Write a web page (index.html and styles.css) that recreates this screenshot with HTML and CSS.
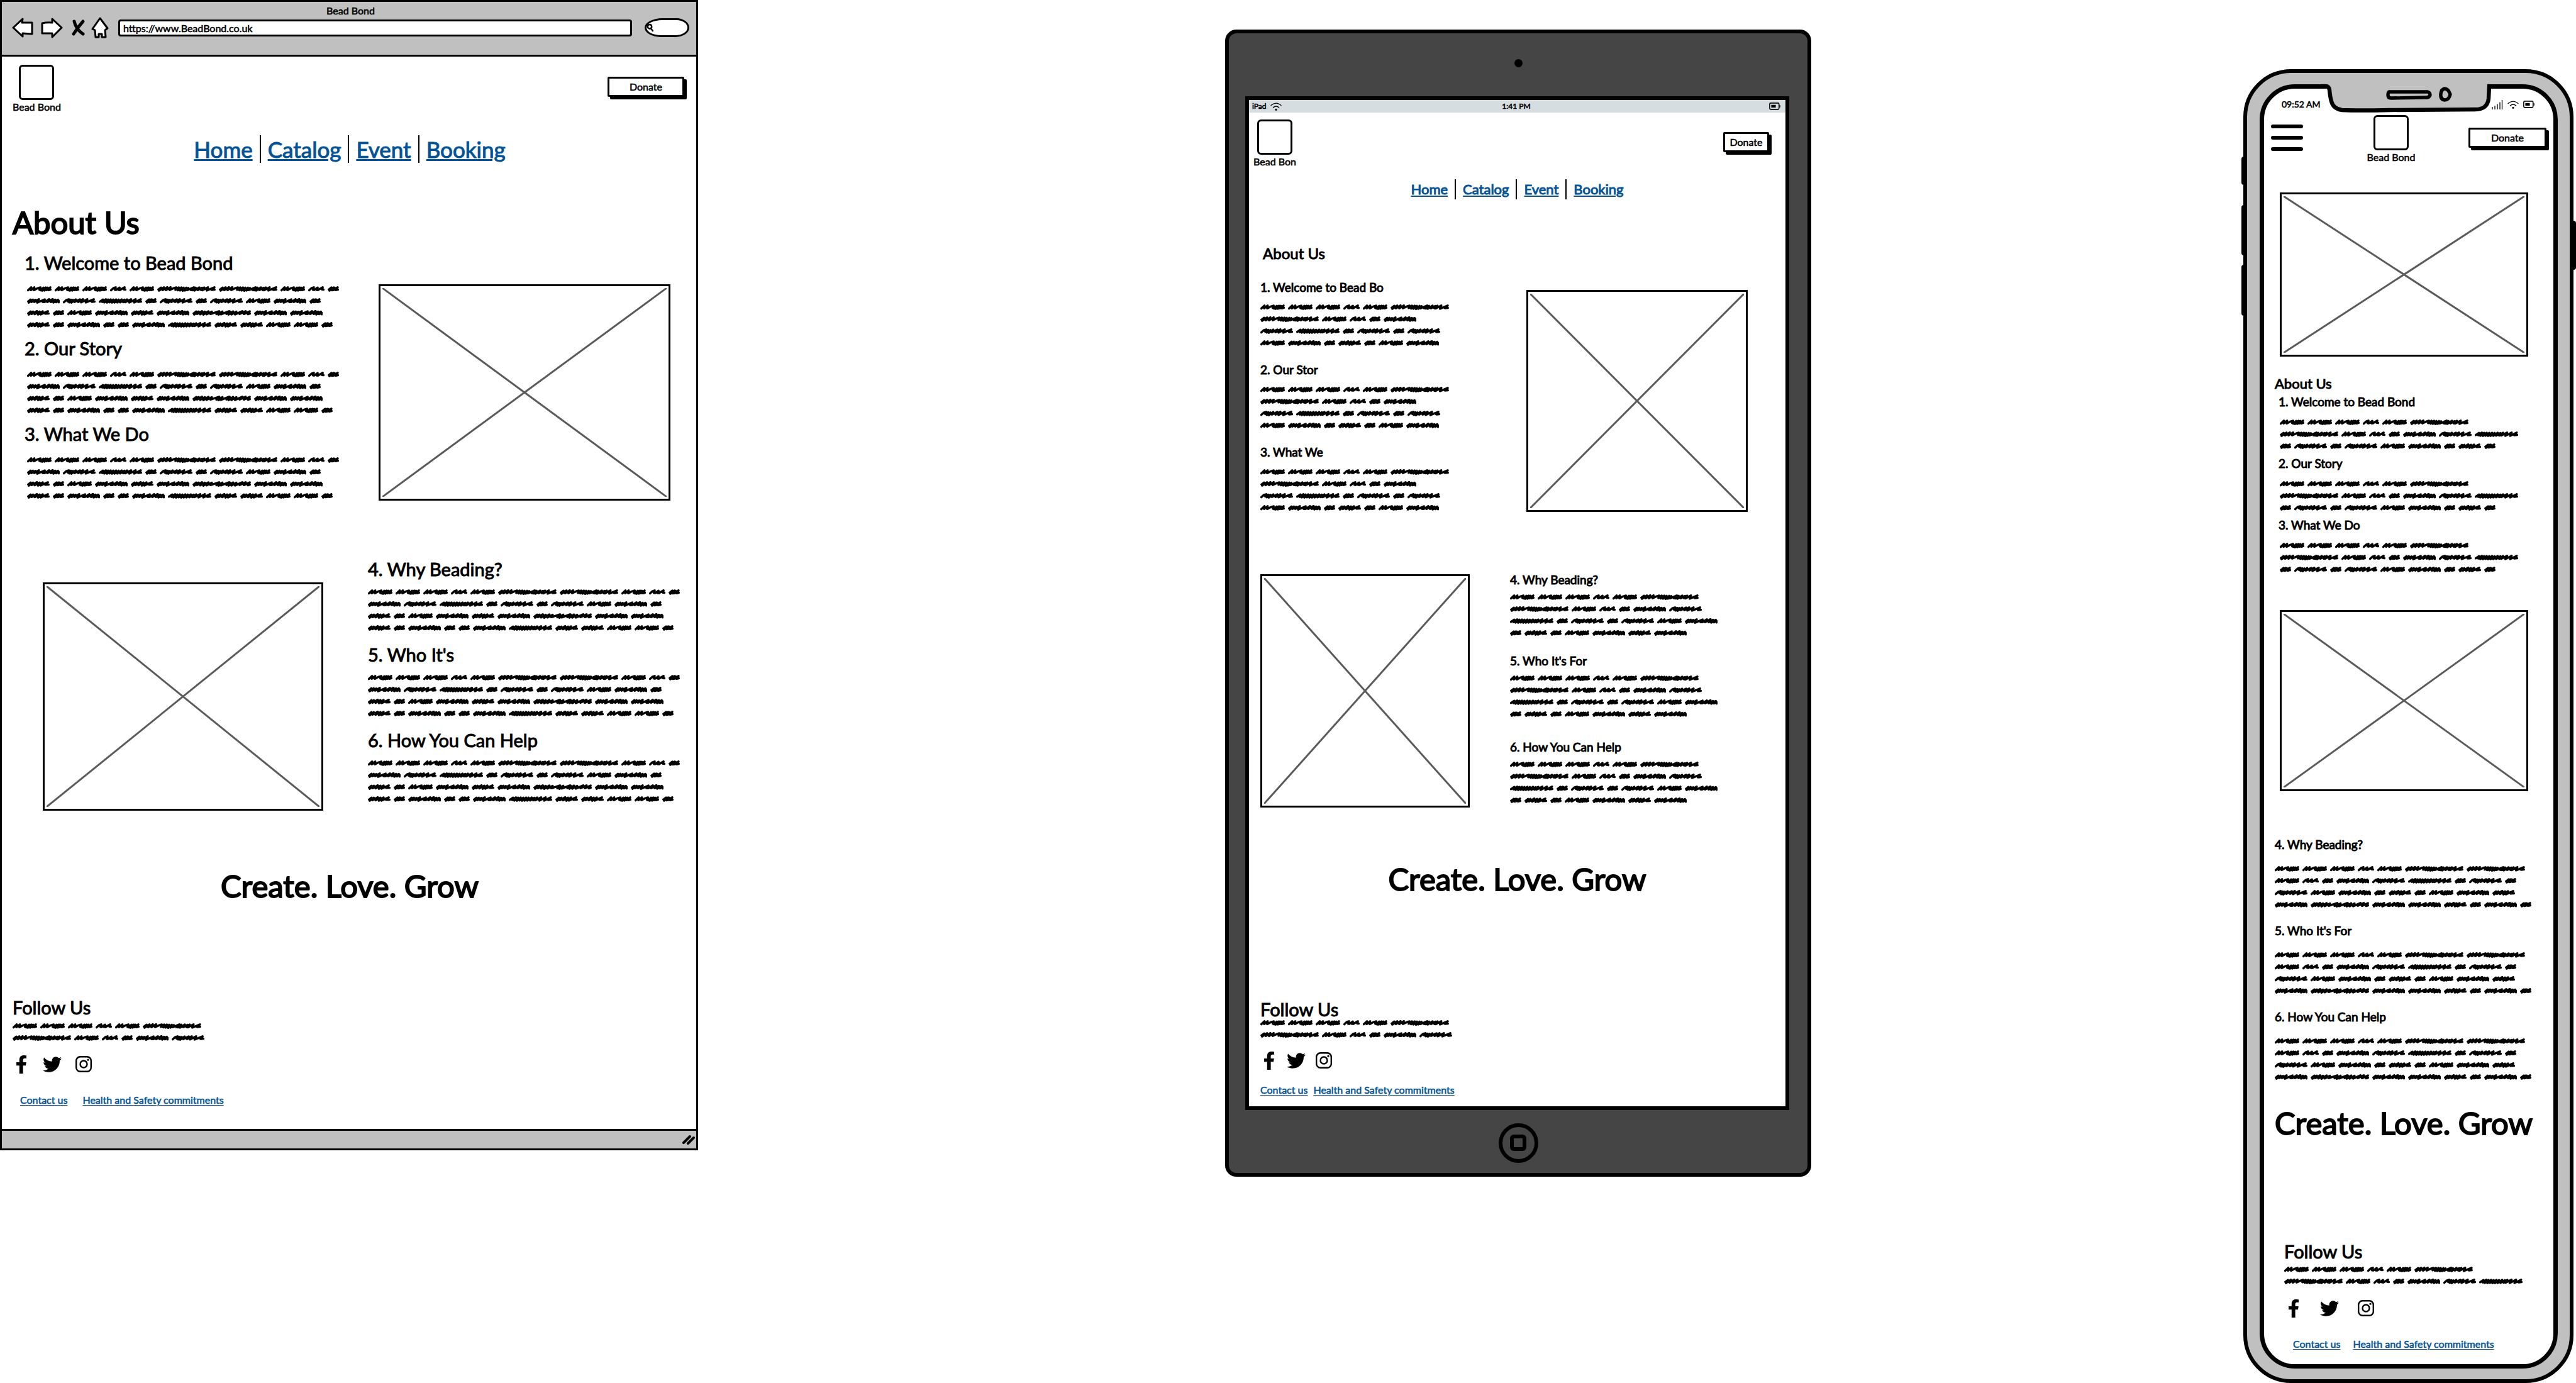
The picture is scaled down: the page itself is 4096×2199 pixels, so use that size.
FILE: index.html
```html
<!DOCTYPE html>
<html lang="en">
<head>
<meta charset="utf-8">
<title>Bead Bond – About Us</title>
<meta name="viewport" content="width=device-width, initial-scale=1">
<link rel="stylesheet" href="styles.css">
</head>
<body>
<svg class="sprite" aria-hidden="true">
  <symbol id="word-a" viewBox="0 0 194 44" preserveAspectRatio="none"><path d="M8 32L33 9 30 31 58 9 54 31 86 15 106 10 98 28 108 32 130 11 120 35 148 10 138 34 162 11 154 31 184 9 170 31 186 26"/></symbol>
  <symbol id="word-b" viewBox="0 0 127 44" preserveAspectRatio="none"><path d="M8 32L28 14 44 9 38 28 46 30 74 11 66 29 76 30 113 9 108 26 119 27"/></symbol>
  <symbol id="word-c" viewBox="0 0 456 44" preserveAspectRatio="none"><path d="M9 26L30 11 14 35 52 9 42 31 78 8 68 31 104 8 96 30 132 14 148 10 142 28 168 10 160 32 188 10 178 34 206 12 198 36 226 12 216 34 242 14 232 31 286 9 262 30 278 32 300 12 290 34 328 10 316 30 350 12 342 30 366 10 352 32 396 9 386 34 446 9 424 29 447 27"/></symbol>
  <symbol id="word-d" viewBox="0 0 258 44" preserveAspectRatio="none"><path d="M9 26L28 11 14 35 46 12 34 30 66 14 56 30 94 9 80 35 140 10 124 30 140 30 174 9 160 31 202 8 188 31 222 12 208 34 244 12 230 32 250 20 250 33"/></symbol>
  <symbol id="word-e" viewBox="0 0 254 44" preserveAspectRatio="none"><path d="M8 32L28 14 46 9 38 26 62 12 50 33 78 14 66 35 100 10 90 30 132 10 118 30 156 9 142 33 190 9 178 34 240 9 224 29 246 27"/></symbol>
  <symbol id="word-f" viewBox="0 0 341 44" preserveAspectRatio="none"><path d="M8 28L34 11 28 30 56 9 44 34 74 11 64 35 94 10 84 33 114 12 104 35 136 10 124 34 156 12 146 34 180 10 168 33 202 12 192 32 222 10 208 32 254 9 240 34 290 9 278 34 330 9 310 29 333 27"/></symbol>
  <symbol id="word-g" viewBox="0 0 89 44" preserveAspectRatio="none"><path d="M9 26L30 10 14 35 46 10 34 32 54 11 44 31 79 9 62 31 81 27"/></symbol>
  <symbol id="word-h" viewBox="0 0 176 44" preserveAspectRatio="none"><path d="M9 26L28 11 14 35 46 12 36 31 76 8 60 32 98 11 86 35 122 10 106 34 162 9 142 28 168 27"/></symbol>
  <symbol id="word-i" viewBox="0 0 453 44" preserveAspectRatio="none"><path d="M9 26L30 11 14 35 48 11 36 31 74 9 60 33 96 12 84 35 124 10 110 33 150 12 140 31 206 9 186 31 210 14 202 36 232 12 220 33 284 9 264 30 290 12 280 35 314 10 302 34 340 12 330 34 386 9 366 30 412 9 398 31 444 10 430 32 445 27"/></symbol>
  <symbol id="icon-facebook" viewBox="22 0 275 512" preserveAspectRatio="none"><path d="M279.14 288l14.22-92.66h-88.91v-60.13c0-25.35 12.42-50.06 52.24-50.06h40.42V6.26S260.43 0 225.36 0c-73.22 0-121.08 44.38-121.08 124.72v70.62H22.89V288h81.39v224h100.17V288z"/></symbol>
  <symbol id="icon-twitter" viewBox="0 48 512 416"><path d="M459.37 151.716c.325 4.548.325 9.097.325 13.645 0 138.72-105.583 298.558-298.558 298.558-59.452 0-114.68-17.219-161.137-47.106 8.447.974 16.568 1.299 25.34 1.299 49.055 0 94.213-16.568 130.274-44.832-46.132-.975-84.792-31.188-98.112-72.772 6.498.974 12.995 1.624 19.818 1.624 9.421 0 18.843-1.3 27.614-3.573-48.081-9.747-84.143-51.98-84.143-102.985v-1.299c13.969 7.797 30.214 12.67 47.431 13.319-28.264-18.843-46.781-51.005-46.781-87.391 0-19.492 5.197-37.36 14.294-52.954 51.655 63.675 129.3 105.258 216.365 109.807-1.624-7.797-2.599-15.918-2.599-24.04 0-57.828 46.782-104.934 104.934-104.934 30.213 0 57.502 12.67 76.67 33.137 23.715-4.548 46.456-13.32 66.599-25.34-7.798 24.366-24.366 44.833-46.132 57.827 21.117-2.273 41.584-8.122 60.426-16.243-14.292 20.791-32.161 39.308-52.628 54.253z"/></symbol>
  <symbol id="icon-instagram" viewBox="0 0 26 26"><rect x="1.2" y="1.2" width="23.6" height="23.6" rx="6.4" fill="none" stroke="#000" stroke-width="2.4"/><circle cx="13" cy="13" r="5.5" fill="none" stroke="#000" stroke-width="2.4"/><circle cx="20" cy="6.2" r="1.6"/></symbol>
  <symbol id="icon-wifi" viewBox="0 0 18 13"><path d="M1 4.6Q9-2.4 17 4.6M4.4 8Q9 4 13.6 8" fill="none" stroke="#000" stroke-width="1.3" stroke-linecap="round"/><circle cx="9" cy="11.3" r="1.6"/></symbol>
  <symbol id="icon-battery" viewBox="0 0 18 12"><rect x=".9" y=".9" width="14.8" height="10" rx="1.6" fill="none" stroke="#000" stroke-width="1.6"/><path d="M3.4 3.8h7.2v4.2H3.4zM16.4 3.6l1.4 1v2.8l-1.4 1z"/></symbol>
</svg>

<main class="board">

  <section class="browser" aria-label="Desktop">
    <header class="toolbar">
      <p class="toolbar-title">Bead Bond</p>
      <div class="toolbar-row">
        <svg class="toolbar-icons" viewBox="0 0 154 34" aria-hidden="true">
          <g fill="#fff" stroke="#000" stroke-width="3" stroke-linejoin="round">
            <path d="M2 17L17 3 16 9 32 9 32 27 17 26 17 31Z"/>
            <path d="M48 10Q56 8 64 9L64 3 79 17 64 32 64 26 48 26Z"/>
            <path d="M140 2L152 18 148 21 149 32 143 32 143 27 138 27 138 32 133 32 132 21 128 19Z"/>
          </g>
          <path d="M99 7Q102 20 113 27M113 7Q105 16 98 27" fill="none" stroke="#000" stroke-width="5" stroke-linecap="round"/>
        </svg>
        <input class="address" type="text" aria-label="Address" value="https://www.BeadBond.co.uk">
        <label class="search">
          <svg viewBox="0 0 14 16" aria-hidden="true"><path d="M6 2Q10 2 10 7 9 10 6 10 2 9 2 6 3 2 6 2M8 9L12 14" fill="none" stroke="#000" stroke-width="3" stroke-linecap="round"/></svg>
          <input type="text" aria-label="Search">
        </label>
      </div>
    </header>
    <div class="page">
      <div class="masthead">
        <div class="logo"><span class="logo-box"></span><span>Bead Bond</span></div>
        <button class="donate" type="button">Donate</button>
      </div>
      <nav class="menu">
        <a href="#home">Home</a><a href="#catalog">Catalog</a><a href="#event">Event</a><a href="#booking">Booking</a>
      </nav>
      <h1>About Us</h1>
      <div class="row row-first">
        <div class="articles">
          <article><h2>1. Welcome to Bead Bond</h2><p class="scribble" data-words="41"></p></article>
          <article><h2>2. Our Story</h2><p class="scribble" data-words="41"></p></article>
          <article><h2>3. What We Do</h2><p class="scribble" data-words="41"></p></article>
        </div>
        <div class="picture"><svg aria-hidden="true"><line x2="100%" y2="100%"/><line x1="100%" x2="0" y2="100%"/></svg></div>
      </div>
      <div class="row row-second">
        <div class="picture"><svg aria-hidden="true"><line x2="100%" y2="100%"/><line x1="100%" x2="0" y2="100%"/></svg></div>
        <div class="articles">
          <article><h2>4. Why Beading?</h2><p class="scribble" data-words="41"></p></article>
          <article><h2>5. Who It's</h2><p class="scribble" data-words="41"></p></article>
          <article><h2>6. How You Can Help</h2><p class="scribble" data-words="41"></p></article>
        </div>
      </div>
      <p class="slogan">Create. Love. Grow</p>
      <footer class="footer">
        <h2>Follow Us</h2>
        <p class="scribble" data-words="12"></p>
        <div class="social">
          <svg class="facebook" role="img" aria-label="Facebook"><use href="#icon-facebook"/></svg>
          <svg class="twitter" role="img" aria-label="Twitter"><use href="#icon-twitter"/></svg>
          <svg class="instagram" role="img" aria-label="Instagram"><use href="#icon-instagram"/></svg>
        </div>
        <div class="links"><a href="#contact">Contact us</a><a href="#safety">Health and Safety commitments</a></div>
      </footer>
    </div>
    <div class="statusbar"><svg viewBox="0 0 20 16" aria-hidden="true"><path d="M2 13L12 3M9 14L18 5" stroke="#000" stroke-width="4" stroke-linecap="round"/></svg></div>
  </section>

  <section class="tablet" aria-label="Tablet">
    <div class="bezel-top"><span class="camera"></span></div>
    <div class="screen">
      <div class="tablet-status">
        <span class="carrier">iPad <svg class="wifi" aria-hidden="true"><use href="#icon-wifi"/></svg></span>
        <span>1:41 PM</span>
        <svg class="battery" aria-hidden="true"><use href="#icon-battery"/></svg>
      </div>
      <div class="page">
        <div class="masthead">
          <div class="logo"><span class="logo-box"></span><span>Bead Bon</span></div>
          <button class="donate" type="button">Donate</button>
        </div>
        <nav class="menu">
          <a href="#home">Home</a><a href="#catalog">Catalog</a><a href="#event">Event</a><a href="#booking">Booking</a>
        </nav>
        <h1>About Us</h1>
        <div class="row row-first">
          <div class="articles">
            <article><h2>1. Welcome to Bead Bo</h2><p class="scribble" data-words="24"></p></article>
            <article><h2>2. Our Stor</h2><p class="scribble" data-words="24"></p></article>
            <article><h2>3. What We</h2><p class="scribble" data-words="24"></p></article>
          </div>
          <div class="picture"><svg aria-hidden="true"><line x2="100%" y2="100%"/><line x1="100%" x2="0" y2="100%"/></svg></div>
        </div>
        <div class="row row-second">
          <div class="picture"><svg aria-hidden="true"><line x2="100%" y2="100%"/><line x1="100%" x2="0" y2="100%"/></svg></div>
          <div class="articles">
            <article><h2>4. Why Beading?</h2><p class="scribble" data-words="26"></p></article>
            <article><h2>5. Who It's For</h2><p class="scribble" data-words="26"></p></article>
            <article><h2>6. How You Can Help</h2><p class="scribble" data-words="26"></p></article>
          </div>
        </div>
        <p class="slogan">Create. Love. Grow</p>
        <footer class="footer">
          <h2>Follow Us</h2>
          <p class="scribble" data-words="12"></p>
          <div class="social">
            <svg class="facebook" role="img" aria-label="Facebook"><use href="#icon-facebook"/></svg>
            <svg class="twitter" role="img" aria-label="Twitter"><use href="#icon-twitter"/></svg>
            <svg class="instagram" role="img" aria-label="Instagram"><use href="#icon-instagram"/></svg>
          </div>
          <div class="links"><a href="#contact">Contact us</a><a href="#safety">Health and Safety commitments</a></div>
        </footer>
      </div>
    </div>
    <div class="bezel-bottom"><button class="home" type="button" aria-label="Home"><span></span></button></div>
  </section>

  <section class="phone" aria-label="Phone">
    <span class="side side-mute"></span><span class="side side-up"></span><span class="side side-down"></span><span class="side side-power"></span>
    <div class="phone-body">
      <div class="phone-screen">
        <svg class="notch" viewBox="0 0 270 50" aria-hidden="true">
          <path d="M10 0H270V8H10Z" fill="#c0c0c0"/>
          <path d="M0 8H8Q13 8 14 14 15 25 17 32 20 44 34 46 60 47 110 46L246 45Q265 45 267 28L268 8" fill="#c0c0c0"/>
          <path d="M0 8H8Q13 8 14 14 15 25 17 32 20 44 34 46 60 47 110 46L246 45Q265 45 267 28L268 8H270" fill="none" stroke="#000" stroke-width="6.4"/>
          <path d="M109 17H170Q174 18 174 22 173 26 168 26L112 27Q107 27 107 22 107 18 109 17Z" fill="#c0c0c0" stroke="#000" stroke-width="5.4"/>
          <path d="M197 12Q203 12 206 21 204 30 197 30 190 29 191 20 192 13 197 12Z" fill="#c0c0c0" stroke="#000" stroke-width="5.4"/>
        </svg>
        <div class="phone-status">
          <span>09:52 AM</span>
          <span class="indicators">
            <svg class="signal" viewBox="0 0 18 15" aria-hidden="true"><path d="M1 11v4M5 9v6M9 6.500v8.500M13 3.500v11.500M16.500 0v15" stroke="#000" stroke-width="1.300"/></svg>
            <svg class="wifi" aria-hidden="true"><use href="#icon-wifi"/></svg>
            <svg class="battery" aria-hidden="true"><use href="#icon-battery"/></svg>
          </span>
        </div>
        <div class="page">
          <div class="masthead">
            <button class="burger" type="button" aria-label="Menu"><span></span><span></span><span></span></button>
            <div class="logo"><span class="logo-box"></span><span>Bead Bond</span></div>
            <button class="donate" type="button">Donate</button>
          </div>
          <div class="picture picture-top"><svg aria-hidden="true"><line x2="100%" y2="100%"/><line x1="100%" x2="0" y2="100%"/></svg></div>
          <h1>About Us</h1>
          <div class="articles articles-top">
            <article><h2>1. Welcome to Bead Bond</h2><p class="scribble" data-words="22"></p></article>
            <article><h2>2. Our Story</h2><p class="scribble" data-words="22"></p></article>
            <article><h2>3. What We Do</h2><p class="scribble" data-words="22"></p></article>
          </div>
          <div class="picture picture-middle"><svg aria-hidden="true"><line x2="100%" y2="100%"/><line x1="100%" x2="0" y2="100%"/></svg></div>
          <div class="articles articles-bottom">
            <article><h2>4. Why Beading?</h2><p class="scribble" data-words="33"></p></article>
            <article><h2>5. Who It's For</h2><p class="scribble" data-words="33"></p></article>
            <article><h2>6. How You Can Help</h2><p class="scribble" data-words="33"></p></article>
          </div>
          <p class="slogan">Create. Love. Grow</p>
          <footer class="footer">
            <h2>Follow Us</h2>
            <p class="scribble" data-words="13"></p>
            <div class="social">
              <svg class="facebook" role="img" aria-label="Facebook"><use href="#icon-facebook"/></svg>
              <svg class="twitter" role="img" aria-label="Twitter"><use href="#icon-twitter"/></svg>
              <svg class="instagram" role="img" aria-label="Instagram"><use href="#icon-instagram"/></svg>
            </div>
            <div class="links"><a href="#contact">Contact us</a><a href="#safety">Health and Safety commitments</a></div>
          </footer>
        </div>
      </div>
    </div>
  </section>

</main>
<script src="scribble.js"></script>
</body>
</html>
```
FILE: styles.css
```css
* { box-sizing: border-box; }

body {
  margin: 0;
  background: #fff;
  color: #000;
  font-family: Lato, "Open Sans", sans-serif;
  font-size: 16px;
  line-height: 20px;
  -webkit-text-stroke: 0.035em currentColor;
}

h1, h2, p { margin: 0; font-weight: 400; }
h1, h2, .slogan, .menu { -webkit-text-stroke: 1px currentColor; }
.slogan, .browser h1 { -webkit-text-stroke: 2px currentColor; }
a { color: #045396; text-decoration: underline; text-underline-offset: 2px; }
button, input { font: inherit; color: inherit; -webkit-text-stroke: inherit; }
.sprite { position: absolute; width: 0; height: 0; }

.board {
  display: grid;
  grid-template-columns: 1110fr 838fr 932fr 684fr 532fr;
  align-items: start;
}

/* Shared page parts */
.masthead { display: flex; justify-content: space-between; align-items: flex-start; }
.logo { display: flex; flex-direction: column; align-items: center; gap: 1px; white-space: nowrap; }
.logo-box { width: 56px; height: 56px; border: 3px solid #000; border-radius: 6px; }
.donate {
  height: 32px;
  padding: 0;
  border: 3px solid #000;
  border-radius: 2px;
  background: #fff;
  box-shadow: 4px 4px 0 #000;
}

.menu { display: flex; justify-content: center; }
.menu a + a { position: relative; }
.menu a + a::before { content: ""; position: absolute; top: 0; bottom: 0; width: 2px; background: #000; }

.picture { border: 3px solid #000; padding: 3px; }
.picture svg { display: block; width: 100%; height: 100%; }
.picture line { stroke: #5b5b5b; stroke-width: 3; }

.row { display: grid; align-items: start; }
.articles { display: flex; flex-direction: column; }

.scribble { display: flex; flex-wrap: wrap; gap: 10px 5px; }
.scribble svg { display: block; height: 9px; fill: none; stroke: #000; stroke-width: 17; stroke-linecap: round; stroke-linejoin: round; }
.word-b { width: 26px; }
.word-a { width: 39px; }
.word-c, .word-i { width: 93px; }
.word-d, .word-e { width: 52px; }
.word-f { width: 69px; }
.word-g { width: 18px; }
.word-h { width: 36px; }

.slogan { font-size: 49px; line-height: 60px; text-align: center; white-space: nowrap; }

.footer h2 { font-size: 29px; line-height: 34px; }
.social { display: flex; align-items: center; height: 30px; }
.facebook { width: 16px; height: 29px; }
.twitter { width: 30px; height: 25px; margin-right: -4px; }
.instagram { width: 26px; height: 26px; }
.links { display: flex; white-space: nowrap; }

/* Desktop browser */
.browser { grid-column: 1; border: 3px solid #000; }
.toolbar { height: 87px; border-bottom: 3px solid #000; background: #c0c0c0; padding: 4px 11px 0 16px; }
.toolbar-title { text-align: center; }
.toolbar-row { display: flex; align-items: center; }
.toolbar-icons { width: 154px; height: 34px; margin-right: 15px; }
.address { flex: 1; height: 27px; padding: 0 5px; border: 3px solid #000; border-radius: 4px; background: #fff; }
.search { display: flex; align-items: center; width: 71px; height: 30px; margin-left: 20px; border: 3px solid #000; border-radius: 28px 20px 22px 26px / 15px; background: #fff; }
.search svg { width: 14px; height: 16px; }
.search input { width: 100%; min-width: 0; border: 0; padding: 0; background: none; }

.browser .page { padding: 13px 15px 36px 17px; }
.browser .donate { width: 122px; margin: 19px 4px 0 0; }
.browser .menu { margin-top: 35px; font-size: 35px; line-height: 44px; gap: 24px; }
.browser .menu a + a::before { left: -13px; }
.browser h1 { margin-top: 64px; font-size: 49px; line-height: 60px; }
.browser .articles h2 { font-size: 29px; line-height: 34px; }
.browser .articles .scribble { max-width: 500px; }
.browser .row-first { margin-top: 18px; padding: 0 26px 0 19px; grid-template-columns: 563fr 464fr; }
.browser .row-first .articles { gap: 16px; }
.browser .row-first h2 { margin-bottom: 20px; }
.browser .row-first .scribble { margin-left: 4px; }
.browser .row-first .picture { margin-top: 51px; height: 344px; }
.browser .row-second { margin-top: 92px; padding-left: 48px; grid-template-columns: 446fr 71fr 507fr; }
.browser .row-second .articles { grid-column: 3; gap: 21px; }
.browser .row-second h2 { margin-bottom: 15px; }
.browser .row-second .picture { margin-top: 38px; height: 363px; }
.browser .slogan { margin-top: 89px; }
.browser .footer { margin-top: 147px; }
.browser .footer .scribble { margin-top: 8px; max-width: 335px; }
.browser .social { margin-top: 22px; padding-left: 6px; gap: 26px; }
.browser .links { margin-top: 32px; padding-left: 12px; gap: 24px; }
.statusbar { display: flex; justify-content: flex-end; align-items: center; height: 31px; padding-right: 2px; border-top: 3px solid #000; background: #c0c0c0; }
.statusbar svg { width: 20px; height: 16px; }

/* Tablet */
.tablet { grid-column: 3; margin-top: 47px; border: 6px solid #000; border-radius: 18px; background: #454545; padding: 0 29px 0 26px; }
.bezel-top { display: flex; justify-content: center; align-items: center; height: 100px; padding: 0 0 6px 3px; }
.camera { width: 13px; height: 13px; border-radius: 50%; background: #000; }
.screen { border: 6px solid #000; background: #fff; }
.tablet-status { display: grid; grid-template-columns: 1fr auto 1fr; align-items: center; height: 20px; padding: 0 8px 0 5px; background: #d6dde0; font-size: 12px; }
.carrier { display: flex; align-items: center; gap: 6px; }
.wifi { width: 18px; height: 13px; }
.battery { width: 18px; height: 12px; justify-self: end; }
.bezel-bottom { display: flex; justify-content: center; align-items: center; height: 100px; padding: 4px 0 0 3px; }
.home { display: grid; place-items: center; width: 63px; height: 63px; padding: 0; border: 6px solid #000; border-radius: 50%; background: none; }
.home span { width: 26px; height: 26px; border: 6px solid #000; border-radius: 6px; }

.tablet .page { padding: 11px 18px 16px 18px; }
.tablet .logo { width: 46px; }
.tablet .donate { width: 73px; margin: 20px 8px 0 0; }
.tablet .menu { margin-top: 18px; font-size: 22px; line-height: 32px; gap: 24px; }
.tablet .menu a + a::before { left: -13px; }
.tablet h1 { margin-top: 71px; padding-left: 4px; font-size: 24px; line-height: 30px; }
.tablet .articles h2 { font-size: 19px; line-height: 24px; }
.tablet .row-first { margin-top: 27px; padding-right: 42px; grid-template-columns: 424fr 353fr; }
.tablet .row-first .articles { gap: 26px; }
.tablet .row-first .scribble { max-width: 302px; }
.tablet .row-first h2 { margin-bottom: 15px; }
.tablet .row-first .picture { margin-top: 16px; height: 353px; }
.tablet .row-second { margin-top: 96px; grid-template-columns: 333fr 64fr 420fr; }
.tablet .row-second .articles { grid-column: 3; gap: 28px; }
.tablet .row-second article:last-child { margin-top: 8px; }
.tablet .row-second .scribble { max-width: 335px; }
.tablet .row-second h2 { margin-bottom: 11px; }
.tablet .row-second .picture { margin-top: 3px; height: 371px; }
.tablet .slogan { margin-top: 83px; }
.tablet .footer { margin-top: 161px; }
.tablet .footer .scribble { max-width: 335px; }
.tablet .social { margin-top: 21px; padding-left: 6px; gap: 20px; }
.tablet .links { margin-top: 22px; gap: 9px; }

/* Phone */
.phone { grid-column: 5; position: relative; margin-top: 110px; padding: 0 4px 0 3px; }
.side { position: absolute; width: 12px; background: #000; border-radius: 4px; }
.side-mute { left: 0; top: 139px; height: 45px; }
.side-up { left: 0; top: 216px; height: 80px; }
.side-down { left: 0; top: 311px; height: 81px; }
.side-power { right: 0; top: 241px; height: 78px; }
.phone-body { position: relative; border: 6px solid #000; border-radius: 76px; background: #c0c0c0; padding: 18px 19px 17px 20px; }
.phone-screen { position: relative; border: 7px solid #000; border-radius: 56px; background: #fff; }
.notch { position: absolute; left: 90px; top: -12px; width: 270px; height: 50px; overflow: visible; }
.phone-status { display: flex; justify-content: space-between; align-items: center; height: 42px; padding: 8px 30px 0 28px; font-size: 14px; }
.indicators { display: flex; align-items: center; gap: 7px; }
.signal { width: 18px; height: 15px; }

.phone .page { padding: 0 7px 22px 11px; }
.phone .masthead { display: grid; grid-template-columns: 151fr 80fr 211fr; }
.burger { display: flex; flex-direction: column; justify-content: space-between; width: 51px; height: 42px; margin-top: 15px; padding: 0; border: 0; background: none; }
.burger span { height: 6px; border-radius: 3px; background: #000; }
.phone .donate { width: 124px; margin: 20px 4px 0 0; justify-self: end; }
.phone .picture { margin: 0 33px 0 14px; }
.phone .picture-top { margin-top: 46px; height: 261px; }
.phone h1 { margin-top: 28px; padding-left: 6px; font-size: 22px; line-height: 30px; }
.phone .articles h2 { font-size: 19px; line-height: 24px; }
.articles-top { margin-top: 2px; padding-left: 12px; gap: 11px; }
.articles-top h2 { margin-bottom: 16px; }
.articles-top .scribble { max-width: 392px; padding-left: 2px; }
.phone .picture-middle { margin-top: 60px; height: 288px; }
.articles-bottom { margin-top: 73px; padding-left: 6px; gap: 25px; }
.articles-bottom h2 { margin-bottom: 22px; }
.articles-bottom .scribble { max-width: 412px; }
.phone .slogan { margin-top: 38px; padding-left: 6px; text-align: left; }
.phone .footer { margin-top: 158px; padding-left: 21px; }
.phone .footer .scribble { margin-top: 7px; max-width: 390px; }
.phone .social { margin-top: 23px; padding-left: 7px; gap: 34px; }
.phone .links { margin-top: 32px; padding-left: 14px; gap: 20px; }
```
FILE: scribble.js
```js
// Fills each placeholder paragraph with scribbled words, wrapped by its own width.
const words = "aaabaccabgdefgegeadghgadhdiddhgdggdfhhaag";
for (const p of document.querySelectorAll(".scribble")) {
  p.innerHTML = [...words.slice(0, Number(p.dataset.words))]
    .map(w => `<svg class="word-${w}" aria-hidden="true"><use href="#word-${w}"/></svg>`)
    .join("");
}
```
